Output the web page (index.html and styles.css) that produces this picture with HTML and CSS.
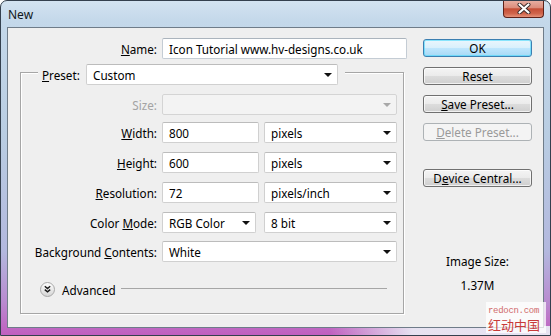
FILE: index.html
```html
<!DOCTYPE html>
<html>
<head>
<meta charset="utf-8">
<link rel="stylesheet" href="styles.css">
</head>
<body>
<div class="window">
  <div class="titlebar">
    <span class="title">New</span>
    <div class="close">
      <svg width="14" height="11" viewBox="0 0 14 11"><path d="M2.5 1.5 L11.5 9.5 M11.5 1.5 L2.5 9.5" stroke="#3a2a28" stroke-width="4" stroke-linecap="round"/><path d="M2.5 1.5 L11.5 9.5 M11.5 1.5 L2.5 9.5" stroke="#ffffff" stroke-width="2.2" stroke-linecap="round"/></svg>
    </div>
  </div>
  <div class="client">
    <div class="main">
      <div class="row name-row">
        <span class="lbl lbl-name"><u>N</u>ame:</span>
        <div class="field name-field">Icon Tutorial www.hv-designs.co.uk</div>
      </div>
      <div class="group">
        <div class="legend">
          <span class="lbl-preset"><u>P</u>reset:</span>
          <div class="field select preset-sel"><span>Custom</span><i class="arrow"></i></div>
        </div>
        <div class="row r-size">
          <span class="lbl disabled">Size:</span>
          <div class="field select disabled-field w-full"><span></span><i class="arrow grey"></i></div>
        </div>
        <div class="row r-width">
          <span class="lbl"><u>W</u>idth:</span>
          <div class="field w-num">800</div>
          <div class="field select w-unit"><span>pixels</span><i class="arrow"></i></div>
        </div>
        <div class="row r-std">
          <span class="lbl"><u>H</u>eight:</span>
          <div class="field w-num">600</div>
          <div class="field select w-unit"><span>pixels</span><i class="arrow"></i></div>
        </div>
        <div class="row r-std">
          <span class="lbl"><u>R</u>esolution:</span>
          <div class="field w-num">72</div>
          <div class="field select w-unit"><span>pixels/inch</span><i class="arrow"></i></div>
        </div>
        <div class="row r-std">
          <span class="lbl">Color <u>M</u>ode:</span>
          <div class="field select w-mode"><span>RGB Color</span><i class="arrow"></i></div>
          <div class="field select w-unit w-bit"><span>8 bit</span><i class="arrow"></i></div>
        </div>
        <div class="row r-bg">
          <span class="lbl">Background <u>C</u>ontents:</span>
          <div class="field select w-full"><span>White</span><i class="arrow"></i></div>
        </div>
        <div class="advanced">
          <svg class="adv-icon" width="15" height="15" viewBox="0 0 15 15">
            <defs><linearGradient id="g" x1="0" y1="0" x2="0" y2="1"><stop offset="0" stop-color="#ffffff"/><stop offset="1" stop-color="#d4d4d4"/></linearGradient></defs>
            <circle cx="7.5" cy="7.5" r="7" fill="url(#g)" stroke="#a8a8a8"/>
            <path d="M4.8 4.3 L7.5 6.6 L10.2 4.3 M4.8 7.6 L7.5 9.9 L10.2 7.6" fill="none" stroke="#1a1a1a" stroke-width="1.4"/>
          </svg>
          <span class="adv-text">Advanced</span>
          <span class="adv-line"></span>
        </div>
      </div>
    </div>
    <div class="side">
      <div class="btn default">OK</div>
      <div class="btn">Reset</div>
      <div class="btn"><u>S</u>ave Preset...</div>
      <div class="btn btn-disabled"><u>D</u>elete Preset...</div>
      <div class="btn btn-device">D<u>e</u>vice Central...</div>
      <div class="info info-label">Image Size:</div>
      <div class="info info-value">1.37M</div>
    </div>
  </div>
  <div class="watermark">
    <span class="wm-en">redocn.com</span>
    <span class="wm-cn">红动中国</span>
  </div>
</div>
</body>
</html>
```
FILE: styles.css
```css
html, body {
  margin: 0;
  padding: 0;
  background: #ffffff;
}

.window {
  position: relative;
  width: 551px;
  height: 336px;
  box-sizing: border-box;
  border: 1px solid #34404e;
  border-radius: 7px 7px 0 0;
  padding: 0 6px 7px 6px;
  display: flex;
  flex-direction: column;
  overflow: hidden;
  font-family: "Noto Sans", "Open Sans", sans-serif;
  font-size: 11.7px;
  color: #000;
  background:
    linear-gradient(90deg, rgba(255,255,255,0) 0%, rgba(255,255,255,0) 60%, rgba(235,240,246,0.9) 75%, rgba(235,240,246,0.9) 100%) bottom / 100% 9px no-repeat,
    linear-gradient(180deg, #d3e3f1 0px, #c4d8ea 20px, #b9cde2 40%, #b3b8de 75%, #b98bd0 90%, #c05fbf 100%);
}

.titlebar {
  height: 26px;
  display: flex;
  justify-content: space-between;
  align-items: flex-start;
}

.title {
  margin: 6px 0 0 1px;
  line-height: 16px;
  font-size: 12px;
  color: #101820;
}

.close {
  width: 41px;
  height: 18px;
  margin-top: -1px;
  margin-right: 0;
  box-sizing: border-box;
  border: 1px solid #5e2118;
  border-top: none;
  border-radius: 0 0 4px 4px;
  background: linear-gradient(180deg, #e9b2a6 0%, #dc8d7c 45%, #c54e36 52%, #d0654b 80%, #e5927a 100%);
  display: flex;
  align-items: center;
  justify-content: center;
}

.client {
  flex: 1;
  display: flex;
  border: 1px solid #6f7c89;
  background: #efefef;
}

.main {
  width: 396px;
  padding-top: 10px;
  flex-shrink: 0;
}

.row {
  display: flex;
  align-items: center;
  gap: 5px;
  height: 21px;
}

.lbl {
  width: 136px;
  text-align: right;
  line-height: 16px;
  white-space: nowrap;
  flex-shrink: 0;
}

.lbl-name {
  width: 149px;
}

.disabled {
  color: #a3a3a3;
}

.field {
  height: 21px;
  box-sizing: border-box;
  background: #ffffff;
  border: 1px solid #d0d0d0;
  border-top-color: #bcbcbc;
  border-radius: 2px;
  padding: 0 5px 0 6px;
  display: flex;
  align-items: center;
  line-height: 16px;
  white-space: nowrap;
  flex-shrink: 0;
}

.name-field {
  width: 245px;
  border-color: #c4ccd4;
  border-top-color: #abb4bd;
}

.select {
  justify-content: space-between;
}

.arrow {
  width: 0;
  height: 0;
  border-left: 4px solid transparent;
  border-right: 4px solid transparent;
  border-top: 4px solid #111;
}

.arrow.grey {
  border-top-color: #a8a8a8;
}

.disabled-field {
  background: #f3f3f3;
  border-color: #d4d4d4;
}

.group {
  margin: 13px 0 0 12px;
  width: 384px;
  box-sizing: border-box;
  border: 1px solid #a6a6a6;
  box-shadow: inset 1px 1px 0 #ffffff, 1px 1px 0 #ffffff;
  padding-bottom: 16px;
}

.legend {
  display: flex;
  align-items: center;
  width: fit-content;
  margin: -9px 0 0 17px;
  padding: 0 7px 0 4px;
  background: #efefef;
}

.lbl-preset {
  width: 38px;
  line-height: 16px;
}

.preset-sel {
  width: 252px;
  margin-left: 6px;
}

.r-size { margin-top: 9px; }
.r-width { margin-top: 7px; }
.r-std { margin-top: 9px; }
.r-bg { margin-top: 8px; }

.w-full { width: 235px; }
.w-num { width: 97px; }
.w-unit { width: 133px; }
.w-mode { width: 94px; }
.w-bit { margin-left: 3px; }

.advanced {
  display: flex;
  align-items: center;
  height: 15px;
  margin: 20px 16px 0 19px;
}

.adv-icon {
  flex-shrink: 0;
}

.adv-text {
  margin-left: 7px;
  line-height: 16px;
}

.adv-line {
  flex: 1;
  height: 1px;
  background: #a6a6a6;
  margin: 0 0 3px 5px;
}

.side {
  width: 109px;
  margin-left: auto;
  margin-right: 11px;
  padding-top: 11px;
  display: flex;
  flex-direction: column;
}

.btn {
  height: 18px;
  box-sizing: border-box;
  border: 1px solid #707070;
  border-radius: 3px;
  background: linear-gradient(180deg, #f4f4f4 0%, #ebebeb 48%, #dcdcdc 52%, #cfcfcf 100%);
  box-shadow: inset 0 0 0 1px rgba(255,255,255,0.7);
  display: flex;
  align-items: center;
  justify-content: center;
  line-height: 16px;
  margin-top: 10px;
  white-space: nowrap;
}

.btn.default {
  margin-top: 0;
  border-color: #3c7fb1;
  background: linear-gradient(180deg, #eaf6fd 0%, #d9f0fc 48%, #bee6fd 52%, #a7d9f5 100%);
  box-shadow: inset 0 0 0 1px rgba(72,216,251,0.6);
}

.btn.btn-disabled {
  border-color: #adb2b5;
  background: #f4f4f4;
  box-shadow: none;
  color: #9a9a9a;
}

.btn.btn-device {
  margin-top: 28px;
}

.info {
  text-align: center;
  line-height: 16px;
}

.info-label {
  margin-top: 66px;
}

.info-value {
  margin-top: 8px;
}

.watermark {
  position: absolute;
  right: 4px;
  bottom: 2px;
  width: 58px;
  padding: 4px 0 1px 2px;
  background: rgba(255,255,255,0.75);
  display: flex;
  flex-direction: column;
}

.wm-en {
  font-family: "Liberation Mono", monospace;
  font-size: 9px;
  letter-spacing: -0.3px;
  line-height: 11px;
  color: #d06a6a;
}

.wm-cn {
  font-family: "Noto Sans CJK SC", sans-serif;
  font-size: 13px;
  line-height: 15px;
  color: #c83a3a;
}
```
